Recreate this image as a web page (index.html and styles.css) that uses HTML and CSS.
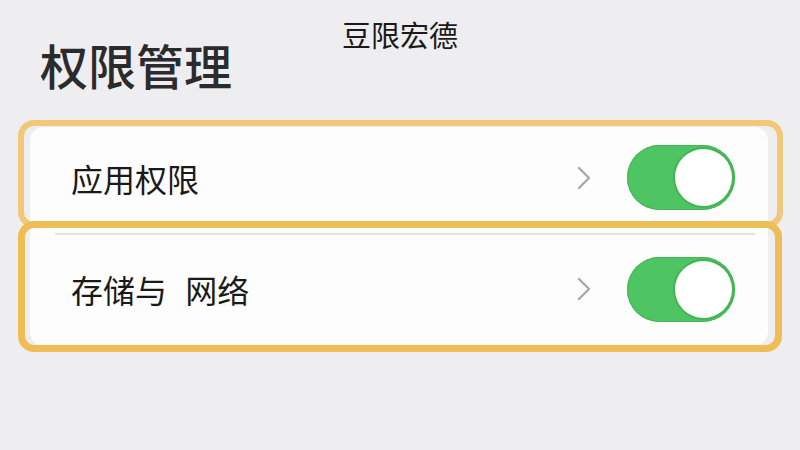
FILE: index.html
```html
<!DOCTYPE html>
<html lang="zh-CN">
<head>
<meta charset="utf-8">
<link rel="stylesheet" href="styles.css">
</head>
<body>
<div class="page">
  <div class="topbar">豆限宏德</div>
  <h1 class="title">权限管理</h1>
  <div class="group">
    <div class="card">
      <div class="row row1">
        <span class="label">应用权限</span>
        <svg class="chev" width="14" height="24" viewBox="0 0 14 24"><path d="M2 2 L12 12 L2 22" fill="none" stroke="#a9a9ab" stroke-width="2.4" stroke-linecap="round" stroke-linejoin="round"/></svg>
        <div class="toggle"><div class="knob"></div></div>
      </div>
      <div class="divider"></div>
      <div class="row row2">
        <span class="label">存储与 网络</span>
        <svg class="chev" width="14" height="24" viewBox="0 0 14 24"><path d="M2 2 L12 12 L2 22" fill="none" stroke="#a9a9ab" stroke-width="2.4" stroke-linecap="round" stroke-linejoin="round"/></svg>
        <div class="toggle"><div class="knob"></div></div>
      </div>
    </div>
  </div>
</div>
</body>
</html>
```

FILE: styles.css
```css
*, *::before, *::after { box-sizing: border-box; }
html, body { margin: 0; padding: 0; }
body {
  width: 800px;
  height: 450px;
  overflow: hidden;
  background: #eeeef0;
  font-family: "Noto Sans CJK SC", "Noto Sans", sans-serif;
  color: #1c1c1e;
}
.page {
  padding-top: 15px;
}
.topbar {
  text-align: center;
  font-size: 29px;
  line-height: 38px;
  height: 22px;
  color: #1a1a1a;
}
.title {
  margin: 0 0 0 40px;
  font-size: 48px;
  line-height: 54px;
  font-weight: 500;
  color: #2b2b2d;
  height: 83px;
}
.group {
  position: relative;
  margin-left: 18px;
  width: 765px;
  padding: 7px 15px 8px 12px;
}
.group::before {
  content: "";
  position: absolute;
  left: 0;
  top: 0;
  width: 765px;
  height: 108px;
  border: 6px solid #f1c877;
  border-radius: 16px;
  pointer-events: none;
}
.group::after {
  content: "";
  position: absolute;
  left: 0;
  top: 101px;
  width: 764px;
  height: 131px;
  border: 7px solid #eebd55;
  border-radius: 16px;
  pointer-events: none;
}
.card {
  background: #fdfdfd;
  border-radius: 14px;
  display: flex;
  flex-direction: column;
}
.row {
  display: flex;
  align-items: center;
  padding-left: 41px;
  padding-right: 33px;
}
.row1 { height: 106px; padding-bottom: 5px; }
.row2 { height: 111px; padding-top: 0; padding-bottom: 3px; }
.label {
  font-size: 32px;
  line-height: 40px;
  color: #1a1a1a;
  flex: 1;
  white-space: pre;
  word-spacing: 11px;
}
.chev {
  margin-right: 36px;
  display: block;
}
.divider {
  height: 2px;
  background: #e3e3e5;
  margin-left: 25px;
  margin-right: 13px;
}
.toggle {
  width: 108px;
  height: 65px;
  border-radius: 33px;
  background: #4fc462;
  box-shadow: inset 0 0 0 1px #45b658;
  display: flex;
  justify-content: flex-end;
  align-items: center;
  padding-right: 3px;
}
.knob {
  width: 57px;
  height: 57px;
  border-radius: 50%;
  background: #ffffff;
  box-shadow: 0 0 0 2px #43b356;
}
```
